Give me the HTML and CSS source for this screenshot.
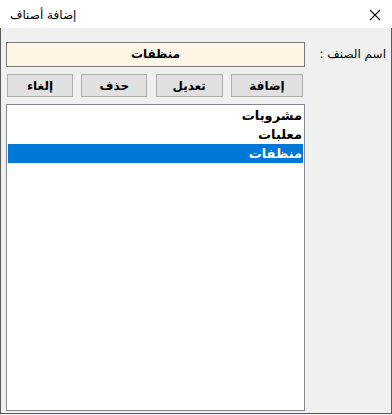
FILE: index.html
```html
<!DOCTYPE html>
<html lang="ar">
<head>
<meta charset="utf-8">
<link rel="stylesheet" href="styles.css">
<title>إضافة أصناف</title>
</head>
<body>
<div class="window">
  <div class="titlebar">
    <span class="title">إضافة أصناف</span>
    <svg class="close" width="12" height="12" viewBox="0 0 12 12"><path d="M1 1 L11 11 M11 1 L1 11" stroke="#000" stroke-width="1.1" fill="none"/></svg>
  </div>
  <div class="client">
    <div class="main">
      <div class="field">منظفات</div>
      <div class="buttons">
        <button class="btn b1">إلغاء</button>
        <button class="btn b2">حذف</button>
        <button class="btn b3">تعديل</button>
        <button class="btn b4">إضافة</button>
      </div>
      <ul class="list">
        <li class="item">مشروبات</li>
        <li class="item">معلبات</li>
        <li class="item selected">منظفات</li>
      </ul>
    </div>
    <div class="side">
      <span class="label">اسم الصنف :</span>
    </div>
  </div>
</div>
</body>
</html>
```
FILE: styles.css
```css
html, body {
  margin: 0;
  padding: 0;
  background: #f0f0f0;
}
body {
  width: 392px;
  height: 415px;
  overflow: hidden;
  font-family: "DejaVu Sans", "Liberation Sans", sans-serif;
}
.window {
  width: 392px;
  height: 414px;
  display: flex;
  flex-direction: column;
}
.titlebar {
  height: 28px;
  background: #ffffff;
  display: flex;
  align-items: center;
  justify-content: space-between;
  padding: 0 11px 0 10px;
  flex: none;
}
.title {
  font-size: 12px;
  color: #000;
  direction: rtl;
  padding-top: 2px;
}
.close {
  display: block;
  margin-top: 1px;
}
.client {
  flex: 1;
  display: flex;
  border-left: 1px solid #5a5a5a;
  border-right: 1px solid #5a5a5a;
  border-bottom: 1px solid #5a5a5a;
  background: #f0f0f0;
  padding: 14px 0 2px 5px;
}
.main {
  width: 299px;
  display: flex;
  flex-direction: column;
}
.field {
  height: 23px;
  border: 1px solid #7a7a7a;
  background: #fdf5e6;
  font-size: 12px;
  font-weight: bold;
  text-align: center;
  line-height: 23px;
  direction: rtl;
  color: #000;
}
.buttons {
  margin-top: 7px;
  display: flex;
  justify-content: space-between;
  padding-left: 1px;
  padding-right: 2px;
}
.btn {
  height: 23px;
  margin: 0;
  padding: 0;
  background: #e1e1e1;
  border: 1px solid #adadad;
  font-family: inherit;
  font-size: 12px;
  font-weight: bold;
  color: #000;
  direction: rtl;
}
.b1, .b2 { width: 66px; }
.b3 { width: 67px; }
.b4 { width: 72px; }
.list {
  list-style: none;
  margin: 7px 0 0 0;
  padding: 1px;
  flex: 1;
  background: #fff;
  border: 1px solid #828790;
  direction: rtl;
}
.item {
  height: 19px;
  line-height: 19px;
  font-size: 13px;
  font-weight: bold;
  padding-right: 1px;
  color: #000;
}
.selected {
  background: #0078d7;
  color: #fff;
}
.side {
  flex: 1;
  display: flex;
  justify-content: flex-end;
  align-items: flex-start;
  padding-right: 5px;
  padding-top: 5px;
}
.label {
  font-size: 12px;
  direction: rtl;
  color: #000;
}
```
